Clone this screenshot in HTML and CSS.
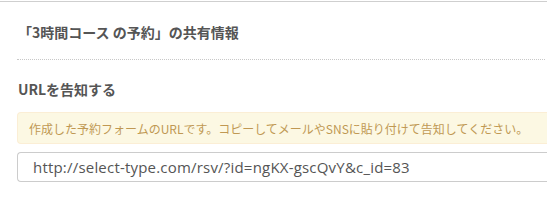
FILE: index.html
```html
<!DOCTYPE html>
<html lang="ja">
<head>
<meta charset="utf-8">
<link rel="stylesheet" href="styles.css">
</head>
<body>
<div class="panel">
  <div class="panel-head">
    <h2 class="panel-title">「3時間コース の予約」の共有情報</h2>
  </div>
  <div class="section">
    <h3 class="section-title">URLを告知する</h3>
    <div class="alert">作成した予約フォームのURLです。コピーしてメールやSNSに貼り付けて告知してください。</div>
    <input class="url-input" type="text" value="http://select-type.com/rsv/?id=ngKX-gscQvY&amp;c_id=83" readonly>
  </div>
</div>
</body>
</html>
```
FILE: styles.css
```css
html, body {
  margin: 0;
  padding: 0;
  background: #fff;
  overflow: hidden;
}
body {
  font-family: "Noto Sans CJK JP", "Open Sans", sans-serif;
  color: #555;
}
.panel {
  margin-top: 1px;
  border-top: 1px solid #cfcfcf;
}
.panel-head {
  margin: 0 2px 0 17px;
  height: 57px;
  border-bottom: 1px dotted #c8c8c8;
  display: flex;
  align-items: center;
}
.panel-title {
  margin: 0 0 0 1px;
  font-size: 14px;
  font-weight: bold;
  line-height: 20px;
  color: #555;
  position: relative;
  top: 1px;
}
.section {
  padding-left: 17px;
  padding-top: 19px;
}
.section-title {
  margin: 0 0 0 1px;
  font-size: 14px;
  font-weight: bold;
  line-height: 20px;
  color: #555;
}
.alert {
  margin-top: 13px;
  height: 32px;
  box-sizing: border-box;
  padding: 0 0 0 11px;
  display: flex;
  align-items: center;
  background: #fcf8e3;
  border: 1px solid #fbeed5;
  border-right: none;
  border-radius: 4px 0 0 4px;
  color: #c09853;
  font-size: 12px;
  white-space: nowrap;
  overflow: hidden;
}
.url-input {
  display: block;
  margin-top: 8px;
  width: 100%;
  height: 30px;
  box-sizing: border-box;
  border: 1px solid #ccc;
  border-right: none;
  border-radius: 4px 0 0 4px;
  padding: 0 0 0 15px;
  font-family: "Open Sans", sans-serif;
  font-size: 15px;
  letter-spacing: 0.2px;
  color: #555;
  background: #fff;
  outline: none;
}
```
